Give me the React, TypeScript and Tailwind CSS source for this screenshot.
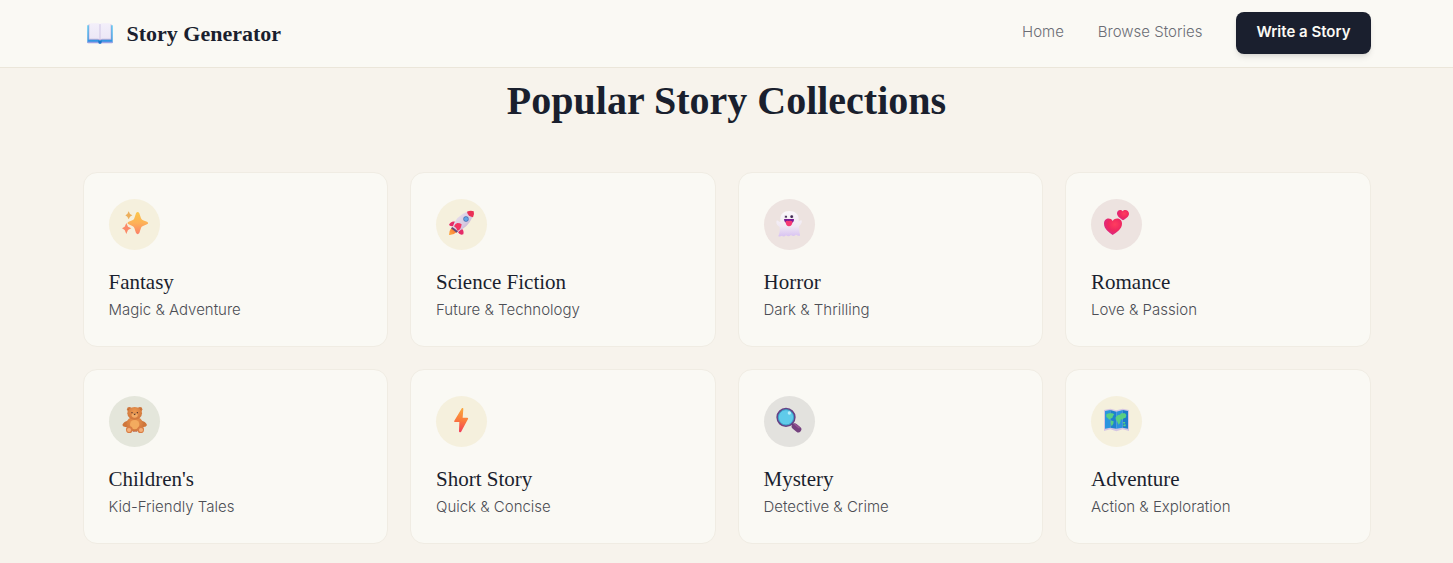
import type { ReactNode } from "react";

function BookIcon() {
  return (
    <svg viewBox="0 0 78 62" className="h-[21px] w-[26px]" aria-hidden="true">
      <defs>
        <linearGradient id="cover" x1="0" y1="0" x2="0" y2="1">
          <stop offset="0" stopColor="#4cc9f5" />
          <stop offset="1" stopColor="#2f8be0" />
        </linearGradient>
        <linearGradient id="page" x1="0" y1="0" x2="0" y2="1">
          <stop offset="0" stopColor="#f3effa" />
          <stop offset="1" stopColor="#ece7f6" />
        </linearGradient>
      </defs>
      <path d="M1 6h76v51a2 2 0 0 1-2 2H44c-1 4-9 4-10 0H3a2 2 0 0 1-2-2z" fill="url(#cover)" />
      <path d="M1 56h76v2a2 2 0 0 1-2 2H3a2 2 0 0 1-2-2z" fill="#9aa0e4" />
      <path d="M34 52h10v5c0 5-10 5-10 0z" fill="#1976c9" />
      <path d="M5 3h68v47H44l-5 2-5-2H5z" fill="#bcaed8" />
      <path d="M7 2q2-2 5-2h21q5 0 6 3v45q-2-1-6-1H7z" fill="url(#page)" />
      <path d="M71 2q-2-2-5-2H45q-5 0-6 3v45q2-1 6-1h26z" fill="url(#page)" />
      <path d="M39 3v45" stroke="#cfc5e5" strokeWidth="3" />
    </svg>
  );
}

function SparklesIcon() {
  return (
    <svg viewBox="0 0 153 153" className="size-full" aria-hidden="true">
      <defs>
        <linearGradient id="spark" x1="0" y1="0" x2="0" y2="1">
          <stop offset="0" stopColor="#fbc64b" />
          <stop offset="0.5" stopColor="#fdb158" />
          <stop offset="1" stopColor="#fb8068" />
        </linearGradient>
      </defs>
      <path d="M81 43q5-8 10 0l5 15q2 5 6 6l12 4q7 4 0 8l-12 5q-5 2-6 6l-5 15q-5 7-10 0l-5-15q-2-5-6-6l-11-5q-7-4 0-8l11-4q5-2 6-6z" fill="url(#spark)" />
      <path d="M59 37l4 8 7 4-7 4-4 8-4-8-6-4 6-4z" fill="#ecae5b" />
      <path d="M52 72l5 11 10 5-10 5-5 12-5-12-8-5 8-5z" fill="#fb8a68" />
    </svg>
  );
}

function RocketIcon() {
  return (
    <svg viewBox="0 0 153 153" className="size-full" aria-hidden="true">
      <defs>
        <linearGradient id="hull" x1="0" y1="0" x2="1" y2="1">
          <stop offset="0" stopColor="#eee7f1" />
          <stop offset="0.6" stopColor="#d7c9e0" />
          <stop offset="1" stopColor="#a890b8" />
        </linearGradient>
        <linearGradient id="flame" x1="1" y1="0" x2="0" y2="1">
          <stop offset="0" stopColor="#f6682f" />
          <stop offset="1" stopColor="#ffb046" />
        </linearGradient>
      </defs>
      <path d="M46 88q-7 7-7 20 14 1 22-8l-6-13z" fill="url(#flame)" />
      <path d="M58 68q-14-3-19 10 6 5 14 3zM76 88q9 6 6 18-10 4-16-6z" fill="#e52b69" />
      <path d="M50 84Q58 52 93 38q11-4 19-1 2 8-3 18Q97 84 65 98z" fill="url(#hull)" />
      <path d="M93 38q11-5 20-1 3 8-2 18-8-1-13-6-4-5-5-11z" fill="#ea3055" />
      <path d="M49 84l17 13-4 4-17-13z" fill="#634778" />
      <path d="M54 82q4-9 10-10 8 0 13 4-1 9-5 15l-7 5q-1-8-11-14z" fill="#f13462" />
      <circle cx="90" cy="60" r="8" fill="#446eb0" />
      <circle cx="90" cy="60" r="6" fill="#63a6e6" />
    </svg>
  );
}

function GhostIcon() {
  return (
    <svg viewBox="0 0 153 153" className="size-full" aria-hidden="true">
      <defs>
        <linearGradient id="ghost" x1="0" y1="0" x2="0" y2="1">
          <stop offset="0" stopColor="#faf7fa" />
          <stop offset="0.6" stopColor="#f0e9f3" />
          <stop offset="1" stopColor="#d8c2f2" />
        </linearGradient>
      </defs>
      <path d="M49 60c0-15 10-24 27-24s28 9 28 24v8c3-1 5-5 8-4 4 4-1 14-7 18l1 17c1 5 3 8 2 11-5 2-9-2-12-3-5 5-10 6-15 1-5 5-10 5-15 1-5 5-10 4-12 1-4 2-9 4-11 1 4-8 5-18 4-28-7-3-12-11-9-18 3-2 6 3 11 4z" fill="url(#ghost)" />
      <circle cx="65" cy="53" r="5" fill="#d6ccda" />
      <circle cx="84" cy="53" r="5" fill="#d6ccda" />
      <circle cx="66" cy="53" r="3" fill="#402b51" />
      <circle cx="83" cy="53" r="4" fill="#402b51" />
      <path d="M60 60h30q1 13-15 14-15-1-15-14z" fill="#7a1a92" />
      <path d="M65 67q4-3 9-1 6-2 11 1c1 10-4 15-10 15s-11-6-10-15z" fill="#f63975" />
    </svg>
  );
}

function HeartsIcon() {
  return (
    <svg viewBox="0 0 153 153" className="size-full" aria-hidden="true">
      <defs>
        <radialGradient id="heart" cx="0.6" cy="0.35" r="0.7">
          <stop offset="0" stopColor="#ff3d5e" />
          <stop offset="0.55" stopColor="#ef2760" />
          <stop offset="1" stopColor="#d52b8c" />
        </radialGradient>
      </defs>
      <path d="M65 66c-7-12-26-9-26 8 0 16 16 26 26 34 11-8 28-18 28-34 0-17-20-20-28-8z" fill="url(#heart)" />
      <path d="M95 37c-5-8-18-4-17 7 1 9 11 15 18 20 8-5 18-11 18-20 0-11-14-15-19-7z" fill="url(#heart)" />
    </svg>
  );
}

function BearIcon() {
  return (
    <svg viewBox="0 0 153 153" className="size-full" aria-hidden="true">
      <defs>
        <radialGradient id="fur" cx="0.5" cy="0.35" r="0.7">
          <stop offset="0" stopColor="#ed9950" />
          <stop offset="1" stopColor="#cb7139" />
        </radialGradient>
      </defs>
      <path d="M57 74q-12 1-17 13 3 9 17 5zM97 74q12 1 17 13-3 9-17 5z" fill="#cf763b" />
      <ellipse cx="77" cy="84" rx="25" ry="22" fill="url(#fur)" />
      <ellipse cx="77" cy="86" rx="14" ry="14" fill="#f3ab5f" />
      <circle cx="61" cy="40" r="7" fill="#ce753b" />
      <circle cx="93" cy="40" r="7" fill="#ce753b" />
      <circle cx="61" cy="41" r="3" fill="#b0602f" />
      <circle cx="93" cy="41" r="3" fill="#b0602f" />
      <ellipse cx="77" cy="52" rx="22" ry="19" fill="url(#fur)" />
      <ellipse cx="77" cy="58" rx="9" ry="7" fill="#f3ab66" />
      <circle cx="69" cy="50" r="2" fill="#4a2d28" />
      <circle cx="85" cy="50" r="2" fill="#4a2d28" />
      <path d="M73 53h8l-4 5z" fill="#4a2d28" />
      <circle cx="61" cy="101" r="10" fill="#d87d44" />
      <circle cx="95" cy="101" r="10" fill="#d87d44" />
      <circle cx="60" cy="102" r="6" fill="#f5b07a" />
      <circle cx="96" cy="102" r="6" fill="#f5b07a" />
      <path d="M71 104q7 5 14 0l-2 4H73z" fill="#b34d36" />
    </svg>
  );
}

function BoltIcon() {
  return (
    <svg viewBox="0 0 153 153" className="size-full" aria-hidden="true">
      <defs>
        <linearGradient id="bolt" x1="0.5" y1="0" x2="0.4" y2="1">
          <stop offset="0" stopColor="#f9a83f" />
          <stop offset="0.5" stopColor="#fb7b3c" />
          <stop offset="1" stopColor="#f23c5b" />
        </linearGradient>
      </defs>
      <path d="M78 36q4-1 4 2l-2 27h14q4 1 2 4l-21 39q-6 2-6-2l1-28H56q-3-1-1-4z" fill="url(#bolt)" />
    </svg>
  );
}

function MagnifierIcon() {
  return (
    <svg viewBox="0 0 153 153" className="size-full" aria-hidden="true">
      <path d="M82 82l7 6" stroke="#4a4166" strokeWidth="7" />
      <path d="M92 91l11 9" stroke="#74417e" strokeWidth="18" strokeLinecap="round" />
      <path d="M93 85l12 10" stroke="#985494" strokeWidth="5" strokeLinecap="round" />
      <circle cx="66" cy="64" r="26" fill="#5fcbea" stroke="#664386" strokeWidth="6" />
      <circle cx="66" cy="64" r="23" fill="none" stroke="#3ca3ca" strokeWidth="3" />
      <circle cx="76" cy="51" r="5" fill="#b7edfa" />
    </svg>
  );
}

function MapIcon() {
  return (
    <svg viewBox="0 0 153 153" className="size-full" aria-hidden="true">
      <path d="M39 42l19-4 18 5 19-5 19 4v63l-19-5-19 6-18-6-19 5z" fill="#d4c5e3" />
      <path d="M42 45l16-3v53l-16 3z" fill="#2a95df" />
      <path d="M58 42l18 5v51l-18-3z" fill="#1f81ce" />
      <path d="M76 47l19-5v53l-19 3z" fill="#2b91df" />
      <path d="M95 42l16 3v53l-16-3z" fill="#1c7bca" />
      <path d="M46 55l8-3h10l6 3-4 5-2 6-7 2-2 4-4-5-5-4zM59 73l9 3-1 7-5 8-3-8zM74 64l7-7 6-1 3-4h12l4 5-2 8-6 2-4 5-4-3-3 12-4 5-5-10-4-6zM96 78h7l-2 5-5-1zM97 86l7-1v6h-7z" fill="#59cf82" />
    </svg>
  );
}

type Collection = {
  title: string;
  desc: string;
  icon: ReactNode;
  tint: string;
};

const collections: Collection[] = [
  { title: "Fantasy", desc: "Magic & Adventure", icon: <SparklesIcon />, tint: "bg-[#f5f0dd]" },
  { title: "Science Fiction", desc: "Future & Technology", icon: <RocketIcon />, tint: "bg-[#f5f0dd]" },
  { title: "Horror", desc: "Dark & Thrilling", icon: <GhostIcon />, tint: "bg-[#ede3e0]" },
  { title: "Romance", desc: "Love & Passion", icon: <HeartsIcon />, tint: "bg-[#ede3e0]" },
  { title: "Children's", desc: "Kid-Friendly Tales", icon: <BearIcon />, tint: "bg-[#e4e6db]" },
  { title: "Short Story", desc: "Quick & Concise", icon: <BoltIcon />, tint: "bg-[#f5f0dd]" },
  { title: "Mystery", desc: "Detective & Crime", icon: <MagnifierIcon />, tint: "bg-[#e3e2de]" },
  { title: "Adventure", desc: "Action & Exploration", icon: <MapIcon />, tint: "bg-[#f5f0dd]" },
];

function Header() {
  return (
    <header className="sticky top-0 z-10 border-b border-[#ebe6da] bg-[#faf9f4]">
      <div className="mx-auto flex h-[67px] w-full max-w-[1336px] items-center justify-between px-6">
        <a href="#" className="flex items-center gap-[14px] pl-1 font-['Liberation_Serif',serif] text-[22px] font-bold text-[#1a1f2e]">
          <BookIcon />
          Story Generator
        </a>
        <nav className="flex items-center gap-[34px] pb-0.5 text-[15px] text-[#6b6d75]">
          <a href="#" className="font-light">Home</a>
          <a href="#" className="font-light">Browse Stories</a>
          <button type="button" className="h-[42px] rounded-lg bg-[#1a1f2e] px-5 font-semibold text-[#faf9f4] shadow-md">
            Write a Story
          </button>
        </nav>
      </div>
    </header>
  );
}

function CollectionCard({ title, desc, icon, tint }: Collection) {
  return (
    <a href="#" className="block rounded-[14px] border border-[#f0ece3] bg-[#faf9f4] px-[25px] pt-[26px] pb-[22px]">
      <div className={`size-[51px] overflow-hidden rounded-full ${tint}`}>{icon}</div>
      <h3 className="mt-[18px] font-['Liberation_Serif',serif] text-[21px] leading-7 text-[#1a1f2e]">{title}</h3>
      <p className="text-[15px] leading-7 font-light text-[#4c4e54]">{desc}</p>
    </a>
  );
}

export default function App() {
  return (
    <div className="min-h-screen bg-[#f7f3ec] font-['Inter',sans-serif]">
      <Header />
      <main className="mx-auto w-full max-w-[1336px] px-6 pt-[9px] pb-[18px]">
        <h2 className="text-center font-['Liberation_Serif',serif] text-[40px] leading-[48px] font-bold text-[#1a1f2e]">
          Popular Story Collections
        </h2>
        <div className="mt-[47px] grid grid-cols-1 gap-[22px] sm:grid-cols-2 lg:grid-cols-4">
          {collections.map((item) => (
            <CollectionCard key={item.title} {...item} />
          ))}
        </div>
      </main>
    </div>
  );
}
